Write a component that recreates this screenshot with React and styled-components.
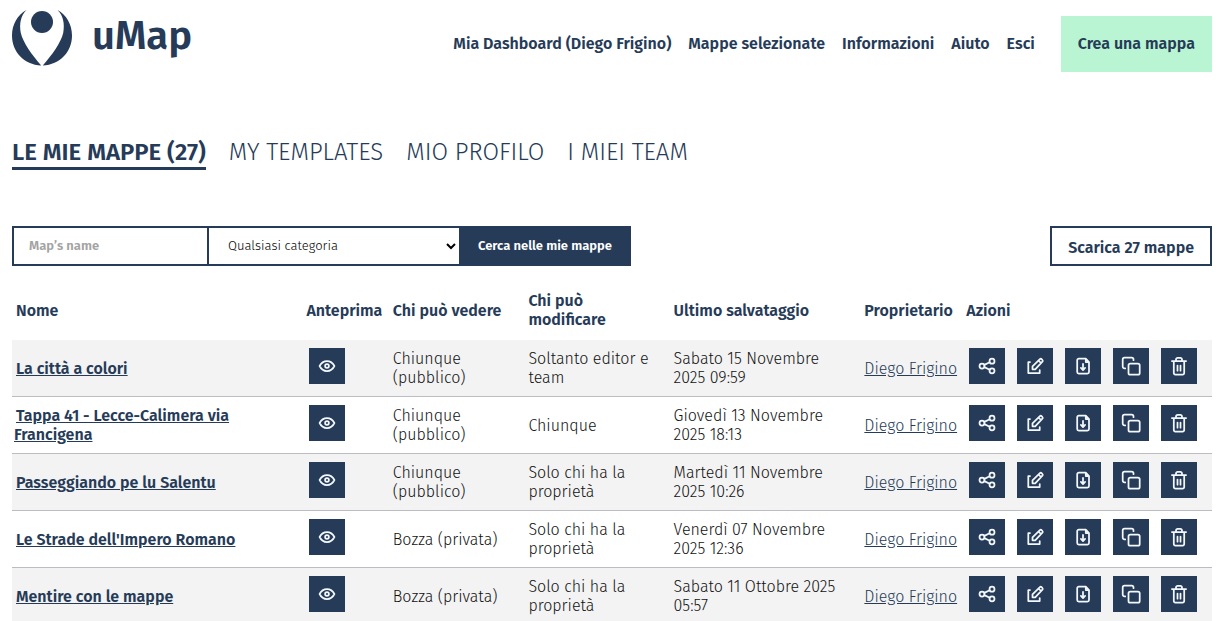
import React from "react";
import styled, { createGlobalStyle, css } from "styled-components";

const NAVY = "#263b58";
const FONT = '"Fira Sans", Roboto, "Noto Sans", sans-serif';

const GlobalStyle = createGlobalStyle`
  *, *::before, *::after { box-sizing: border-box; }
  body {
    margin: 0;
    background: #fff;
    color: #111;
    font-family: ${FONT};
    font-size: 16px;
    font-weight: 300;
    line-height: 19px;
    overflow: hidden;
  }
  a { color: ${NAVY}; }
`;

const Page = styled.div`
  padding: 0 16px 0 12px;
`;

const Header = styled.header`
  display: flex;
  align-items: center;
  justify-content: space-between;
  padding: 16px 0;
`;

const Brand = styled.a`
  display: flex;
  align-items: center;
  gap: 20px;
  height: 56px;
  padding-bottom: 14px;
  text-decoration: none;
`;

const BrandName = styled.span`
  padding-bottom: 2px;
  font-size: 40px;
  line-height: 40px;
  font-weight: 600;
`;

const Nav = styled.nav`
  display: flex;
  align-items: center;
  gap: 17px;
`;

const NavLink = styled.a`
  padding-bottom: 1px;
  font-weight: 600;
  text-decoration: none;
`;

const CreateButton = styled.a`
  margin-left: 9px;
  padding: 18px 17px 19px;
  background: #b9f5d2;
  font-weight: 600;
  text-decoration: none;
`;

const Tabs = styled.nav`
  display: flex;
  gap: 23px;
  padding-top: 50px;
`;

const Tab = styled.a`
  border-bottom: 3px solid transparent;
  font-size: 24px;
  line-height: 29px;
  text-transform: uppercase;
  text-decoration: none;
  ${({ $active }) =>
    $active &&
    css`
      font-weight: 600;
      border-bottom-color: ${NAVY};
    `}
`;

const Toolbar = styled.div`
  display: flex;
  justify-content: space-between;
  margin-top: 56px;
`;

const SearchForm = styled.form`
  display: flex;
  height: 40px;
`;

const SearchInput = styled.input`
  width: 197px;
  padding: 0 15px 2px;
  border: 2px solid ${NAVY};
  border-radius: 0;
  background: #fff;
  font: 600 13px ${FONT};
  color: ${NAVY};
  &::placeholder { color: #a3a3a3; opacity: 1; }
`;

const CategorySelect = styled.select`
  width: 250px;
  padding: 0 0 2px 15px;
  border: solid ${NAVY};
  border-width: 2px 0;
  border-radius: 0;
  background: #fff;
  font: 300 13px ${FONT};
  color: #000;
`;

const SearchButton = styled.button`
  width: 172px;
  padding: 0 0 2px;
  border: 0;
  background: ${NAVY};
  color: #fff;
  font: 600 13px ${FONT};
  white-space: nowrap;
`;

const DownloadButton = styled.button`
  height: 40px;
  padding: 2px 16px 0;
  border: 2px solid ${NAVY};
  background: #fff;
  color: ${NAVY};
  font: 600 16px ${FONT};
`;

const Table = styled.table`
  width: 100%;
  margin-top: 16px;
  table-layout: fixed;
  border-collapse: separate;
  border-spacing: 0;
`;

const HeadCell = styled.th`
  width: ${({ $width }) => $width};
  height: 58px;
  padding: 0 10px 2px 4px;
  color: ${NAVY};
  font-weight: 600;
  text-align: left;
  vertical-align: middle;
  white-space: ${({ $wrap }) => ($wrap ? "normal" : "nowrap")};
`;

const Row = styled.tr`
  height: 57px;
  &:nth-child(odd) { background: #f3f3f3; }
`;

const Cell = styled.td`
  padding: 0 10px 0 4px;
  border-bottom: 1px solid #bcbcc4;
  vertical-align: middle;
`;

const NameCell = styled(Cell)`
  padding: 0 40px 0 2px;
  text-indent: 2px;
  a { font-weight: 600; }
`;

const OwnerCell = styled(Cell)`
  white-space: nowrap;
`;

const Actions = styled.div`
  display: flex;
  gap: 12px;
  padding: 0 0 4px 3px;
`;

const IconButton = styled.button`
  width: 36px;
  height: 36px;
  padding: 0;
  border: 0;
  background: ${NAVY};
  color: #f3f8ff;
  svg { display: block; }
`;

const Icon = ({ children }) => (
  <svg
    width="36"
    height="36"
    viewBox="0 0 36 36"
    fill="none"
    stroke="currentColor"
    strokeWidth="1.75"
    strokeLinecap="round"
    strokeLinejoin="round"
    aria-hidden="true"
  >
    {children}
  </svg>
);

const EyeIcon = () => (
  <Icon>
    <path d="M10.600 18C12.200 14.800 14.800 13 18 13s5.800 1.800 7.400 5c-1.600 3.200-4.200 5-7.400 5s-5.800-1.800-7.400-5z" />
    <circle cx="18" cy="18" r="1.900" />
  </Icon>
);

const ShareIcon = () => (
  <Icon>
    <circle cx="13" cy="18" r="2.500" />
    <circle cx="23" cy="13.200" r="2.500" />
    <circle cx="23" cy="22.800" r="2.500" />
    <path d="M15.300 16.900l5.400-2.600M15.300 19.100l5.400 2.600" />
  </Icon>
);

const EditIcon = () => (
  <Icon>
    <path d="M13 14h-1.700v11h11.400v-3" />
    <path d="M15.500 21.300v-2.900l7.400-7.200c.5-.5 1.200-.5 1.700 0l.8.8c.5.500.5 1.200 0 1.700l-7.200 7.600zM21.600 12.600l2.400 2.400" />
  </Icon>
);

const FileIcon = () => (
  <Icon>
    <path d="M20.800 10.600h-7a1.600 1.600 0 0 0-1.600 1.600v11.800a1.600 1.600 0 0 0 1.600 1.600h8.600a1.600 1.600 0 0 0 1.600-1.600V14zM20.800 10.600V14H24" />
    <path d="M18 15.800v6M15.900 19.900l2.100 2.200 2.100-2.200" />
  </Icon>
);

const CopyIcon = () => (
  <Icon>
    <rect x="15.500" y="15.500" width="11.200" height="11.200" rx="1.800" />
    <path d="M12.200 20.400h-.7a1.800 1.800 0 0 1-1.800-1.800v-7.200a1.800 1.800 0 0 1 1.800-1.800h7.200a1.800 1.800 0 0 1 1.800 1.800v.8" />
  </Icon>
);

const TrashIcon = () => (
  <Icon>
    <path d="M10.900 13h14.200M12.800 13v12a1.500 1.500 0 0 0 1.500 1.500h7.400a1.500 1.500 0 0 0 1.500-1.500V13M15 12.800v-1.400a1.600 1.600 0 0 1 1.600-1.600h2.800a1.600 1.600 0 0 1 1.600 1.600v1.400M16.500 17.500v5.200M19.500 17.500v5.200" />
  </Icon>
);

const Logo = () => (
  <svg width="60" height="58" viewBox="0 0 60 58" fill={NAVY} aria-hidden="true">
    <path d="M14.500 2C5.500 7 0 16.500 0 27.500 0 44 12 56.500 29.200 57.600 20 47 11 34.500 8.800 25 7.200 16 8.500 8 14.500 2z" />
    <path d="M45.500 2C54.500 7 60 16.500 60 27.500 60 44 48 56.500 30.800 57.600 40 47 49 34.500 51.200 25 52.800 16 51.500 8 45.500 2z" />
    <circle cx="30" cy="14" r="11" />
  </svg>
);

const ACTIONS = [
  ["Condividi", ShareIcon],
  ["Modifica", EditIcon],
  ["Scarica", FileIcon],
  ["Duplica", CopyIcon],
  ["Elimina", TrashIcon],
];

const COLUMNS = [
  ["Nome", "24.2%"],
  ["Anteprima", "7.2%"],
  ["Chi può vedere", "11.3%"],
  ["Chi può modificare", "12.1%", true],
  ["Ultimo salvataggio", "15.9%"],
  ["Proprietario", "8.5%"],
  ["Azioni", "20.8%"],
];

const MAPS = [
  ["La città a colori", "Chiunque (pubblico)", "Soltanto editor e team", "Sabato 15 Novembre 2025 09:59"],
  ["Tappa 41 - Lecce-Calimera via Francigena", "Chiunque (pubblico)", "Chiunque", "Giovedì 13 Novembre 2025 18:13"],
  ["Passeggiando pe lu Salentu", "Chiunque (pubblico)", "Solo chi ha la proprietà", "Martedì 11 Novembre 2025 10:26"],
  ["Le Strade dell'Impero Romano", "Bozza (privata)", "Solo chi ha la proprietà", "Venerdì 07 Novembre 2025 12:36"],
  ["Mentire con le mappe", "Bozza (privata)", "Solo chi ha la proprietà", "Sabato 11 Ottobre 2025 05:57"],
];

export default function App() {
  return (
    <Page>
      <GlobalStyle />
      <Header>
        <Brand href="#home">
          <Logo />
          <BrandName>uMap</BrandName>
        </Brand>
        <Nav>
          <NavLink href="#dashboard">Mia Dashboard (Diego Frigino)</NavLink>
          <NavLink href="#selezionate">Mappe selezionate</NavLink>
          <NavLink href="#informazioni">Informazioni</NavLink>
          <NavLink href="#aiuto">Aiuto</NavLink>
          <NavLink href="#esci">Esci</NavLink>
          <CreateButton href="#nuova">Crea una mappa</CreateButton>
        </Nav>
      </Header>
      <main>
        <Tabs>
          <Tab href="#mappe" $active>Le mie mappe (27)</Tab>
          <Tab href="#templates">My templates</Tab>
          <Tab href="#profilo">Mio profilo</Tab>
          <Tab href="#team">I miei team</Tab>
        </Tabs>
        <Toolbar>
          <SearchForm onSubmit={(e) => e.preventDefault()}>
            <SearchInput type="search" placeholder="Map’s name" aria-label="Map’s name" />
            <CategorySelect aria-label="Categoria">
              <option>Qualsiasi categoria</option>
            </CategorySelect>
            <SearchButton type="submit">Cerca nelle mie mappe</SearchButton>
          </SearchForm>
          <DownloadButton type="button">Scarica 27 mappe</DownloadButton>
        </Toolbar>
        <Table>
          <thead>
            <tr>
              {COLUMNS.map(([label, width, wrap]) => (
                <HeadCell key={label} scope="col" $width={width} $wrap={wrap}>{label}</HeadCell>
              ))}
            </tr>
          </thead>
          <tbody>
            {MAPS.map(([name, view, edit, saved]) => (
              <Row key={name}>
                <NameCell><a href="#mappa">{name}</a></NameCell>
                <Cell>
                  <Actions>
                    <IconButton type="button" aria-label="Anteprima"><EyeIcon /></IconButton>
                  </Actions>
                </Cell>
                <Cell>{view}</Cell>
                <Cell>{edit}</Cell>
                <Cell>{saved}</Cell>
                <OwnerCell><a href="#utente">Diego Frigino</a></OwnerCell>
                <Cell>
                  <Actions>
                    {ACTIONS.map(([label, Glyph]) => (
                      <IconButton key={label} type="button" aria-label={label}><Glyph /></IconButton>
                    ))}
                  </Actions>
                </Cell>
              </Row>
            ))}
          </tbody>
        </Table>
      </main>
    </Page>
  );
}
